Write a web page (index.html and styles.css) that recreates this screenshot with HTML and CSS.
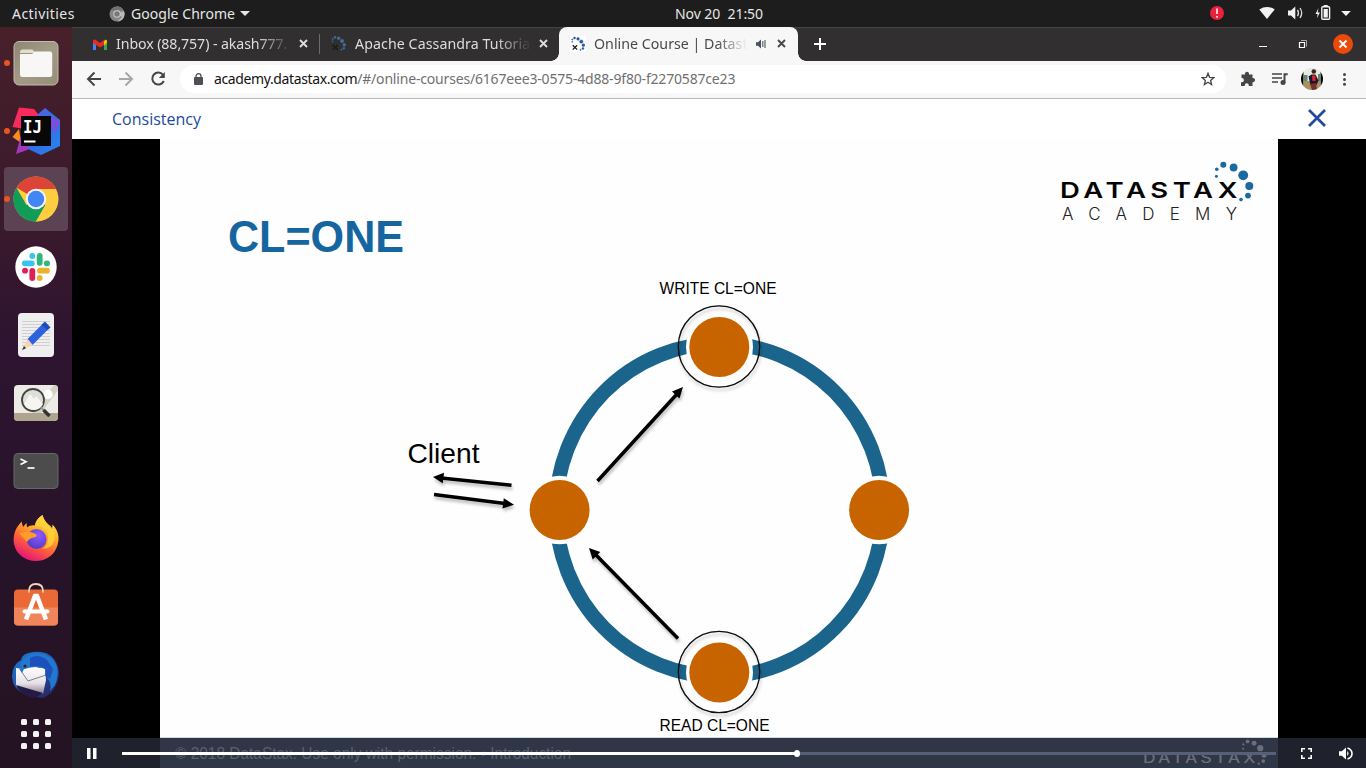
FILE: index.html
```html
<!DOCTYPE html>
<html lang="en">
<head>
<meta charset="utf-8">
<title>Online Course | Datastax</title>
<link rel="stylesheet" href="styles.css">
</head>
<body>
<svg class="defs" width="0" height="0">
  <defs>
    <g id="dots">
      <circle cx="1216.800" cy="169.300" r="1.800"/><circle cx="1216.400" cy="176.200" r="1.500"/>
      <circle cx="1223.300" cy="164.700" r="3"/><circle cx="1233.600" cy="167.500" r="3.900"/>
      <circle cx="1243.200" cy="175.300" r="4.900"/><circle cx="1249.300" cy="186" r="4"/>
      <circle cx="1248" cy="195.600" r="2.900"/><circle cx="1241" cy="199.600" r="1.800"/>
    </g>
    <linearGradient id="gFiles" x1="0" y1="0" x2="1" y2="1"><stop offset="0" stop-color="#8d8671"/><stop offset=".5" stop-color="#a39b87"/><stop offset="1" stop-color="#958d78"/></linearGradient>
    <linearGradient id="gIjR" x1="0" y1="0" x2="1" y2="1"><stop offset="0" stop-color="#6f57e0"/><stop offset=".5" stop-color="#2f6fe8"/><stop offset="1" stop-color="#2688ee"/></linearGradient>
    <linearGradient id="gFox" x1=".8" y1="0" x2=".3" y2="1"><stop offset="0" stop-color="#fff44f"/><stop offset=".35" stop-color="#ffb02a"/><stop offset=".65" stop-color="#ff5f3a"/><stop offset="1" stop-color="#e3107c"/></linearGradient>
    <radialGradient id="gGlobe" cx=".6" cy=".3" r=".8"><stop offset="0" stop-color="#9059ff"/><stop offset="1" stop-color="#4a3ac0"/></radialGradient>
    <linearGradient id="gBird" x1="0" y1="0" x2=".8" y2="1"><stop offset="0" stop-color="#1a7bd0"/><stop offset=".5" stop-color="#2059b5"/><stop offset="1" stop-color="#27245e"/></linearGradient>
    <linearGradient id="gMail" x1="0" y1="0" x2="0" y2="1"><stop offset="0" stop-color="#fff"/><stop offset=".6" stop-color="#e5e2e7"/><stop offset="1" stop-color="#8d7d91"/></linearGradient>
    <filter id="shadow" x="-20%" y="-20%" width="150%" height="160%"><feDropShadow dx="1" dy="3" stdDeviation="1.500" flood-color="#000" flood-opacity=".25"/></filter>
  </defs>
</svg>

<header class="topbar">
  <span class="activities">Activities</span>
  <span class="appmenu">
    <svg width="16" height="16" viewBox="0 0 16 16"><circle cx="8" cy="8" r="7.500" fill="#858585"/><path d="M8 8V.5A7.500 7.500 0 0 1 14.500 4.300H8zM8 8l5 3-4.500 4.500A7.500 7.500 0 0 0 15 5z" fill="#b8b8b8"/><path d="M1.500 4.300A7.500 7.500 0 0 1 14.500 4.300H8z" fill="#707070"/><circle cx="8" cy="8" r="3.700" fill="#ccc"/><circle cx="8" cy="8" r="2.700" fill="#777"/></svg>
    <span class="appname">Google Chrome</span><i class="caret"></i>
  </span>
  <span class="clock">Nov 20&nbsp; 21:50</span>
  <div class="tray">
    <svg width="156" height="27" viewBox="1210 0 156 27">
      <circle cx="1217" cy="13" r="7" fill="#e8213d"/><path d="M1217 8.500v5.500M1217 16v1.800" stroke="#ffd7dc" stroke-width="1.800"/>
      <path d="M1259.300 9.400Q1267 4.500 1274.700 9.400L1267 19z" fill="#f2f2f2"/>
      <path d="M1288 10.500h3l4.300-4v13l-4.300-4h-3z" fill="#f2f2f2"/><path d="M1297.500 9.800q2 3.200 0 6.400M1300 8q3.400 5 0 10" stroke="#ddd" stroke-width="1.300" fill="none"/>
      <path d="M1318.500 8l-3 6h2.200l-.8 4.200 3-5.600h-2.200z" fill="#f2f2f2"/><rect x="1321.800" y="6.800" width="7.800" height="12.500" rx="1" stroke="#f2f2f2" stroke-width="1.400" fill="none"/><rect x="1323.700" y="5" width="4" height="2" fill="#f2f2f2"/><rect x="1323.600" y="9" width="4.200" height="8.500" fill="#f2f2f2"/>
      <path d="M1341.200 11h9.600l-4.800 5z" fill="#f2f2f2"/>
    </svg>
  </div>
</header>

<div class="desktop">
  <nav class="dock">
    <div class="app running"><svg width="48" height="48" viewBox="0 0 48 48"><rect x="2" y="2.500" width="44" height="43.500" rx="5" fill="url(#gFiles)" stroke="#c3bcaa"/><path d="M8 13q0-2.500 2.500-2.500h9q1.500 0 2.200 1.200L23 14H8z" fill="#e2ddd0"/><path d="M8 15h12l3-2.500h15q2.200 0 2.200 2.200V35.500q0 2.500-2.500 2.500H10.500Q8 38 8 35.500z" fill="#f8f7f5"/></svg></div>
    <div class="app running"><svg width="48" height="48" viewBox="0 0 48 48"><path d="M7 .5L22 2l8 10-17 10L.5 20z" fill="#fb2a5c"/><path d="M7 22L.5 30 9 36z" fill="#f98a1c"/><path d="M9 28L4 47l22-8z" fill="#a337bd"/><path d="M24 9l9-8 15 12v26l-19 9-13-6z" fill="url(#gIjR)"/><path d="M34 9l14 4-5 14z" fill="#7a4fda"/><rect x="9" y="9" width="30" height="30" fill="#080808"/><text x="11" y="26" class="ij" textLength="19" lengthAdjust="spacingAndGlyphs">IJ</text><rect x="12" y="33.500" width="11.500" height="2" fill="#fff"/></svg></div>
    <div class="app running selected"><svg width="48" height="48" viewBox="0 0 48 48"><circle cx="24" cy="24" r="22.500" fill="#ffcd40"/><path d="M24 24L4.500 12.700A22.500 22.500 0 0 1 43.500 12.700z" fill="#db4437"/><path d="M24 12.700H43.500L46 20z" fill="#db4437"/><path d="M4.500 12.700A22.500 22.500 0 0 0 24 46.500L33.500 30 24 24 14.500 30z" fill="#109d58"/><path d="M24 14h19.800A22.500 22.500 0 0 1 24 46.500L33.500 30z" fill="#ffcd40"/><circle cx="24" cy="24" r="10.300" fill="#f3f3f3"/><circle cx="24" cy="24" r="8.200" fill="#4285f4"/></svg></div>
    <div class="app"><svg width="48" height="48" viewBox="0 0 48 48"><circle cx="24" cy="24" r="20.700" fill="#fff"/><g stroke-linecap="round" stroke-width="5.800"><path d="M12.800 20.300h7" stroke="#36c5f0"/><path d="M20.300 13.100v-.3" stroke="#36c5f0"/><path d="M27.700 12.800v7" stroke="#2eb67d"/><path d="M34.800 20.300h.3" stroke="#2eb67d"/><path d="M28 27.700h7" stroke="#ecb22e"/><path d="M27.700 35v.1" stroke="#ecb22e"/><path d="M20.300 28v7" stroke="#e01e5a"/><path d="M13 27.700h.1" stroke="#e01e5a"/></g></svg></div>
    <div class="app"><svg width="48" height="48" viewBox="0 0 48 48"><rect x="6" y="2" width="36" height="44" rx="4" fill="#efefef"/><path d="M10 10.500h28M10 13.500h28M10 16.500h28M10 19.500h28M10 22.500h28M10 25.500h28M10 28.500h28M10 31.500h28M10 34.500h28" stroke="#cfcfcf"/><path d="M15.500 28L32 11.500l6 5L20.500 34z" fill="#2c62dd"/><path d="M33 10.500l5.500 6-3 2.500-6-5z" fill="#1c4bb9"/><path d="M15.500 28l5 6L10 39z" fill="#f6d4b4"/><path d="M12 35l2 2.200-4 1.800z" fill="#333"/></svg></div>
    <div class="app"><svg width="48" height="48" viewBox="0 0 48 48"><rect x="2" y="6" width="44" height="36" rx="4" fill="#ecebe5"/><path d="M42 6L20 34h9L46 11V9q0-3-4-3z" fill="#d3d1c3"/><path d="M2 34h44v4q0 4-4 4H6q-4 0-4-4z" fill="#ada590"/><circle cx="36" cy="15.500" r="4.700" fill="#fff"/><circle cx="21" cy="21" r="11" fill="#dcdfda" stroke="#444" stroke-width="1.800"/><path d="M12 25l6-10 4 5 2-3 7 8q-2 5-8 6-8 0-11-6z" fill="#f5f5f2"/><path d="M29 28.500l3 3" stroke="#999" stroke-width="2"/><path d="M31.500 31l6 6" stroke="#333" stroke-width="3.500"/></svg></div>
    <div class="app"><svg width="48" height="48" viewBox="0 0 48 48"><rect x="2" y="6.500" width="44" height="35" rx="4" fill="#4c4c4c" stroke="#686868"/><path d="M8.500 12l5.500 2.700-5.500 2.700" stroke="#fff" stroke-width="1.700" fill="none"/><path d="M15.500 21h7" stroke="#fff" stroke-width="1.700"/></svg></div>
    <div class="app"><svg width="48" height="48" viewBox="0 0 48 48"><path d="M30.500 0c-5 3-7 7-7.500 10.500-3-.5-6 .5-8 2L14.500 8 11 12 9.500 6.500 6 11C2 16 1 24 2 29c2 10 11 17 22 17 14 0 23-11 22.500-24C46 17 44 13 40.500 9.500l-.5 5C36 9 32 6 30.500 0z" fill="url(#gFox)"/><circle cx="24.500" cy="24" r="10" fill="url(#gGlobe)"/><path d="M7 18.500q9-3.500 16 0 3 2 .5 3.500Q17 23 15 27q-5-6-8-8.500z" fill="#ff9b29"/><path d="M30.500 0c-5 3-7 7-7.500 11 7 0 12 3 13 10q1 9-6 13 12-1 13-11Q43 13 36 9q-4-3-5.500-9z" fill="#ffd238" fill-opacity=".85"/></svg></div>
    <div class="app"><svg width="48" height="48" viewBox="0 0 48 48"><rect x="2" y="6.500" width="44" height="36" rx="4" fill="#eb6837"/><path d="M2 24.500h44v14q0 4-4 4H6q-4 0-4-4z" fill="#f0855c"/><path d="M17 9.500V8q0-7 7-7t7 7v1.500" stroke="#f6d5b7" stroke-width="1.800" fill="none"/><g fill="none" stroke="#fff" stroke-width="4.500"><path d="M14 36.500L23 13h2l9 23.500"/><path d="M12.500 28.500h23" stroke-linecap="round" stroke-width="4"/></g></svg></div>
    <div class="app"><svg width="48" height="48" viewBox="0 0 48 48"><path d="M21 1q14-2 21 7 8 12 3 24-4 12-15 15L12 43Q1 38 0 26q0-12 9-17 1-7 12-8z" fill="url(#gBird)"/><path d="M4 17l8 1q13-4 21 0l1 11-3 14L4 35z" fill="url(#gMail)"/><path d="M7 17l9 13 18-6" stroke="#85818a" fill="none"/><path d="M8 19q0-9 5-12 4-5 12-5 16 1 20 14 2 9-2 18l-5 6q2-9-3-13 3-12-7-10-10-3-16 1l-2 4z" fill="#2377cc"/><path d="M18 7q8-5 17 2l6 9-3 10-5-4 1-6q-9-5-16-2z" fill="#1c50bc"/><circle cx="13" cy="15" r="1.600" fill="#322"/><path d="M4 34l27 8-8 5Q9 46 4 34z" fill="#241a45"/></svg></div>
    <div class="app grid"><svg width="30" height="30" viewBox="0 0 30 30" fill="#f2f2f0"><rect width="6" height="6" rx="1.500"/><rect x="12" width="6" height="6" rx="1.500"/><rect x="24" width="6" height="6" rx="1.500"/><rect y="12" width="6" height="6" rx="1.500"/><rect x="12" y="12" width="6" height="6" rx="1.500"/><rect x="24" y="12" width="6" height="6" rx="1.500"/><rect y="24" width="6" height="6" rx="1.500"/><rect x="12" y="24" width="6" height="6" rx="1.500"/><rect x="24" y="24" width="6" height="6" rx="1.500"/></svg></div>
  </nav>

  <main class="window">
    <div class="tabs">
      <div class="tab first">
        <svg width="14" height="11" viewBox="0 0 14 11"><path d="M0 1.500v9.500h3V4z" fill="#4285f4"/><path d="M14 1.500v9.500h-3V4z" fill="#34a853"/><path d="M11 2l1.500-1.500L14 1.500V4l-3 2.500z" fill="#fbbc04"/><path d="M0 1.500Q1 0 2.500.7L7 4l4-3v5L7 8.500 0 4z" fill="#ea2b20"/></svg>
        <span class="label">Inbox (88,757) - akash777.</span>
        <svg class="x" width="9" height="9" viewBox="0 0 9 9"><path d="M1 1l7 7M8 1l-7 7"/></svg>
      </div>
      <div class="tab second">
        <svg width="16" height="16" viewBox="1212 161 45 45"><use href="#dots" fill="#416f9e" stroke="#416f9e" stroke-width="1.500"/><path d="M1217 186l14 14M1231 186l-14 14" stroke="#1e1c1d" stroke-width="5"/></svg>
        <span class="label">Apache Cassandra Tutoria</span>
        <svg class="x" width="9" height="9" viewBox="0 0 9 9"><path d="M1 1l7 7M8 1l-7 7"/></svg>
      </div>
      <div class="tab active">
        <svg width="16" height="16" viewBox="1210 159 47 47"><path d="M1210 159h47v47h-47z" fill="#fff"/><use href="#dots" fill="#2856a2" stroke="#2856a2" stroke-width="1.500"/><path d="M1218 186l13 13M1231 186l-13 13" stroke="#222" stroke-width="4"/></svg>
        <span class="label">Online Course | Datast</span>
        <svg class="snd" width="11" height="10" viewBox="0 0 11 10"><path d="M0 3.300h2L5 .5v9L2 6.700H0z" fill="#4b5060"/><path d="M6.800 2v6M9 1v8" stroke="#5f6368" stroke-width="1.200"/></svg>
        <svg class="x" width="9" height="9" viewBox="0 0 9 9"><path d="M1 1l7 7M8 1l-7 7"/></svg>
      </div>
      <svg class="plus" width="12" height="12" viewBox="0 0 12 12"><path d="M6 0v12M0 6h12" stroke="#fff" stroke-width="2"/></svg>
      <svg class="winctl" width="100" height="34" viewBox="1256 27 100 34"><path d="M1259 46.500h8" stroke="#fff"/><path d="M1299.500 42.500h5v5h-5z" stroke="#fff" stroke-width="1.200" fill="none"/><path d="M1301 40.500h5.500v6" stroke="#aaa" fill="none"/><circle cx="1343" cy="44" r="10" fill="#eb4a0a"/><path d="M1339.500 40.500l7 7M1346.500 40.500l-7 7" stroke="#fff" stroke-width="1.800"/></svg>
    </div>

    <div class="toolbar">
      <svg class="navi" width="86" height="36" viewBox="84 61 86 36" fill="none" stroke-width="2"><path d="M101 79H88.500M94.500 72.500L88 79l6.500 6.500" stroke="#42464a"/><path d="M119 79h12.500M125.500 72.500L132 79l-6.500 6.500" stroke="#a5a7a9"/><path d="M163 74.800A6 6 0 1 0 163.800 81" stroke="#42464a"/><path d="M164.800 72v6h-6z" fill="#42464a"/></svg>
      <div class="omnibox">
        <svg width="9" height="12" viewBox="0 0 9 12"><rect y="4" width="9" height="8" rx="1" fill="#4c4f53"/><path d="M2 5V3.200a2.500 2.500 0 0 1 5 0V5" stroke="#4c4f53" stroke-width="1.300" fill="none"/></svg>
        <span class="url"><b>academy.datastax.com</b>/#/online-courses/6167eee3-0575-4d88-9f80-f2270587ce23</span>
        <svg class="star" width="14" height="14" viewBox="0 0 14 14"><path d="M7 1.300l1.600 4 4.300.3-3.300 2.800 1 4.200L7 10.300l-3.600 2.300 1-4.200L1.100 5.600l4.300-.3z" fill="none" stroke="#42464a" stroke-width="1.300"/></svg>
      </div>
      <svg class="tools" width="126" height="36" viewBox="1236 61 126 36"><path d="M1241.500 74.500h3.500v-.8a2 2 0 0 1 4 0v.8h3.500v3.500h.5a2 2 0 0 1 0 4.200h-.5V86h-3.700v-.8a2 2 0 0 0-4 0v.8H1241v-3.700h.8a2 2 0 0 0 0-4.200h-.3z" fill="#42464a"/><path d="M1272 74h10M1272 78h10M1272 82h6" stroke="#42464a" stroke-width="1.700"/><path d="M1284.500 73.300v9.500M1283.700 74.200h4" stroke="#42464a" stroke-width="2"/><circle cx="1283" cy="82.500" r="2.500" fill="#42464a"/>
        <clipPath id="avatar"><circle cx="1312" cy="79" r="11"/></clipPath><g clip-path="url(#avatar)"><path d="M1300 67h24v24h-24z" fill="#e6eae3"/><path d="M1300 67h3.500v24h-3.500zM1320.500 67h4v24h-4z" fill="#050505"/><path d="M1303.500 81h17v11h-17z" fill="#a4925f"/><path d="M1303.500 75h4v6h-4zM1318 74h2.500v7h-2.500z" fill="#688371"/><path d="M1308.500 76.500l3-2 4 0 3 6-2 4.500h-6z" fill="#17182b"/><path d="M1312 75.500h3.500v5.500h-3z" fill="#f01d2b"/><circle cx="1313.800" cy="71.500" r="2.300" fill="#3b2621"/><path d="M1310 84l2 6h5l-1-7z" fill="#7c2d30"/></g>
        <circle cx="1344.500" cy="74.500" r="1.500" fill="#42464a"/><circle cx="1344.500" cy="79.500" r="1.500" fill="#42464a"/><circle cx="1344.500" cy="84.300" r="1.500" fill="#42464a"/></svg>
    </div>

    <div class="lesson">
      <span class="lesson-title">Consistency</span>
      <svg width="18" height="18" viewBox="0 0 18 18"><path d="M1 1l16 16M17 1L1 17" stroke="#214a9c" stroke-width="2.700"/></svg>
    </div>

    <section class="stage">
      <svg class="slide" width="1118" height="629" viewBox="160 139 1118 629">
        <rect x="160" y="139" width="1118" height="629" fill="#fefefe"/>
        <text x="228" y="251.500" class="title" textLength="176" lengthAdjust="spacingAndGlyphs">CL=ONE</text>
        <ellipse cx="719.500" cy="510" rx="163.500" ry="166.500" fill="none" stroke="#1b658c" stroke-width="14.500"/>
        <g fill="#fefefe"><circle cx="719.500" cy="347" r="33.500"/><circle cx="719.500" cy="672.500" r="33.500"/><circle cx="559.500" cy="510" r="34.300"/><circle cx="879" cy="510" r="34.300"/></g>
        <g fill="#c86400"><circle cx="719.300" cy="347" r="30"/><circle cx="719.300" cy="672.500" r="30"/><circle cx="559.600" cy="510" r="30"/><circle cx="879.100" cy="510" r="30"/></g>
        <g fill="none" stroke="#080808" stroke-width="1.300" filter="url(#shadow)"><circle cx="719" cy="346.500" r="40.700"/><circle cx="719" cy="672" r="40.700"/></g>
        <g filter="url(#shadow)" stroke="#000" stroke-width="3.500">
          <path d="M597.500 481L677 394M678 638.500L595 554M511.500 485.300L441 478M434 494.500L505 503.500"/>
          <g stroke="none"><path d="M683 387l-3.500 11.500-7.500-7z"/><path d="M589 548l11.300 4-7.600 7.500z"/><path d="M433 477l11-4.300-1.200 10.500z"/><path d="M514 504.800l-11.500 3.800 1.300-10.300z"/></g>
        </g>
        <text x="659.500" y="294" class="lbl" textLength="117" lengthAdjust="spacingAndGlyphs">WRITE CL=ONE</text>
        <text x="659.500" y="731" class="lbl" textLength="110" lengthAdjust="spacingAndGlyphs">READ CL=ONE</text>
        <text x="407.500" y="463" class="client" textLength="72" lengthAdjust="spacingAndGlyphs">Client</text>
        <use href="#dots" fill="#1a699f"/>
        <text transform="translate(1060 198) scale(1.250 1)" class="brand" textLength="142" lengthAdjust="spacing">DATASTAX</text>
        <text x="1062" y="220" class="academy" textLength="175" lengthAdjust="spacing">ACADEMY</text>
        <rect x="160" y="737" width="1118" height="1" fill="#cfd9e6"/>
        <rect x="160" y="738" width="1118" height="30" fill="#2f3645"/>
        <text x="175" y="759" class="copy" textLength="396" lengthAdjust="spacingAndGlyphs">© 2018 DataStax. Use only with permission. • Introduction</text>
        <text transform="translate(1143 763) scale(1.250 1)" class="brand faint" textLength="90" lengthAdjust="spacing">DATASTAX</text>
        <g transform="translate(468.300 636.500) scale(.637)"><use href="#dots" fill="#6b6e7c"/></g>
      </svg>
      <div class="controls">
        <svg class="pause" width="10" height="11" viewBox="0 0 10 11"><path d="M0 0h3.500v11H0zM6 0h3.500v11H6z" fill="#fff"/></svg>
        <div class="track"><div class="played"></div></div>
        <svg class="full" width="11" height="11" viewBox="0 0 11 11"><path d="M.8 4V.8H4M7 .8h3.200V4M10.200 7v3.200H7M4 10.200H.8V7" stroke="#fff" stroke-width="1.600" fill="none"/></svg>
        <svg width="14" height="13" viewBox="0 0 14 13"><path d="M0 4.300h2.800L7 .5v12L2.800 8.700H0z" fill="#fff"/><path d="M8.200 4q2.600 2.500 0 5" fill="#fff"/><path d="M8.500.9q4.500 1.600 4.500 5.600t-4.500 5.600" stroke="#fff" stroke-width="1.600" fill="none"/></svg>
      </div>
    </section>
  </main>
</div>
</body>
</html>
```

FILE: styles.css
```css
* { box-sizing: border-box; }
body {
  margin: 0; width: 1366px; height: 768px; overflow: hidden;
  display: flex; flex-direction: column;
  font-family: "Noto Sans", "Open Sans", sans-serif; font-size: 14px;
}
svg { display: block; flex: none; }
.defs { height: 0; width: 0; position: absolute; }

.topbar {
  height: 27px; flex: none; background: #1d1d1d; color: #e6e6e6;
  display: grid; grid-template-columns: 1fr auto 1fr; align-items: center;
  grid-template-areas: "left clock tray"; line-height: 26px;
}
.activities { grid-area: left; padding-left: 12px; letter-spacing: .45px; }
.appmenu { grid-area: left; display: flex; align-items: center; padding-left: 109px; }
.appname { margin-left: 6px; letter-spacing: .05px; }
.caret { border: 5px solid transparent; border-top-color: #e6e6e6; border-bottom: 0; margin-left: 5px; }
.clock { grid-area: clock; padding-left: 72px; letter-spacing: -.05px; }
.tray { grid-area: tray; justify-self: end; }

.desktop { flex: 1; display: flex; min-height: 0; }
.dock {
  width: 72px; flex: none; display: flex; flex-direction: column; align-items: center; gap: 4px; padding-top: 4px;
  background: linear-gradient(#47202a, #3b1a2c 25%, #2e1430 42%, #271329 72%, #241322);
}
.app {
  width: 64px; height: 64px; flex: none; border-radius: 4px; position: relative;
  display: flex; align-items: center; justify-content: center;
}
.selected { background: #5b4354; }
.running::before { content: ""; position: absolute; left: 0; top: 29px; width: 6px; height: 6px; border-radius: 50%; background: #e95420; }
.grid { height: 46px; }
.ij { font: bold 18px "DejaVu Sans Mono", monospace; fill: #fff; }

.window { flex: 1; min-width: 0; display: flex; flex-direction: column; }
.tabs { height: 34px; flex: none; display: flex; align-items: center; background: #322f30 linear-gradient(#464344, #464344) 0 0 / 100% 1px no-repeat; color: #dedede; }
.tab { height: 34px; display: flex; align-items: center; flex: none; font-size: 14.2px; }
.first { width: 248px; padding-left: 21px; background: linear-gradient(#6d6b6c, #6d6b6c) 247px 7px / 1px 20px no-repeat; }
.second { width: 239px; padding-left: 11px; }
.active { width: 239px; padding-left: 11px; background: #f7f7f7; color: #48494b; border-radius: 8px 8px 0 0; position: relative; }
.active::before, .active::after { content: ""; position: absolute; bottom: 0; width: 8px; height: 8px; }
.active::before { left: -8px; background: radial-gradient(circle at 0 0, transparent 7.5px, #f7f7f7 8px); }
.active::after { right: -8px; background: radial-gradient(circle at 8px 0, transparent 7.5px, #f7f7f7 8px); }
.label {
  white-space: nowrap; overflow: hidden; width: 176px; margin-left: 9px; letter-spacing: -.1px; padding-bottom: 2px;
  -webkit-mask-image: linear-gradient(90deg, #000 80%, transparent);
  mask-image: linear-gradient(90deg, #000 80%, transparent);
}
.second .label { margin-left: 8px; letter-spacing: .08px; }
.active .label { width: 153px; margin-left: 8px; letter-spacing: .02px; }
.x { margin-left: 7px; margin-top: -1px; stroke: currentColor; stroke-width: 1.9; }
.second .x { margin-left: 8px; }
.snd { margin-left: 9px; }
.active .x { margin-left: 10px; }
.plus { margin-left: 16px; }
.winctl { margin-left: auto; margin-right: 10px; }

.toolbar { height: 38px; flex: none; background: #f7f7f7; display: flex; align-items: center; border-bottom: 1px solid #b9b9b9; padding-bottom: 1px; }
.navi { margin-left: 12px; }
.omnibox { width: 1046px; height: 28px; margin-left: 10px; border-radius: 14px; background: #fff; display: flex; align-items: center; padding: 0 11px 0 14px; }
.url { margin-left: 11px; color: #707070; white-space: nowrap; font-size: 14px; letter-spacing: -.26px; padding-bottom: 1px; }
.url b { font-weight: 400; color: #111; letter-spacing: -.38px; }
.url { letter-spacing: -.18px; }
.star { margin-left: auto; }
.tools { margin-left: 10px; }

.lesson { height: 40px; flex: none; background: #fff; display: flex; align-items: center; justify-content: space-between; padding: 0 40px; color: #214a9c; font-size: 16px; }
.lesson svg { margin-top: -2px; }
.lesson-title { font-family: "Open Sans", sans-serif; }

.stage { flex: 1; position: relative; background: linear-gradient(#000 599px, #1f222d 599px); display: flex; padding-left: 88px; }
.controls { position: absolute; left: 0; right: 0; bottom: 0; height: 30px; display: flex; align-items: center; padding: 0 13px 0 15px; }
.track { width: 1154px; height: 3px; margin-left: 25px; background: #566079; }
.played { width: 675px; height: 3px; background: #fff; position: relative; }
.played::after { content: ""; position: absolute; right: -3px; top: -2px; width: 6px; height: 7px; border-radius: 50%; background: #fff; }
.full { margin-left: 25px; margin-right: auto; }

.title { font: bold 44px "Liberation Sans", Arial, sans-serif; fill: #1565a0; }
.lbl { font: 15.6px "Liberation Sans", Arial, sans-serif; }
.client { font: 28px "Liberation Sans", Arial, sans-serif; }
.brand { font: 600 22px Inter, sans-serif; fill: #050505; }
.academy { font: 300 17px Inter, "Liberation Sans", sans-serif; fill: #222; }
.copy { font: 16px "Liberation Sans", Arial, sans-serif; fill: #596070; }
.faint { font-size: 14px; font-weight: 500; fill: #6b6e7c; }
```
